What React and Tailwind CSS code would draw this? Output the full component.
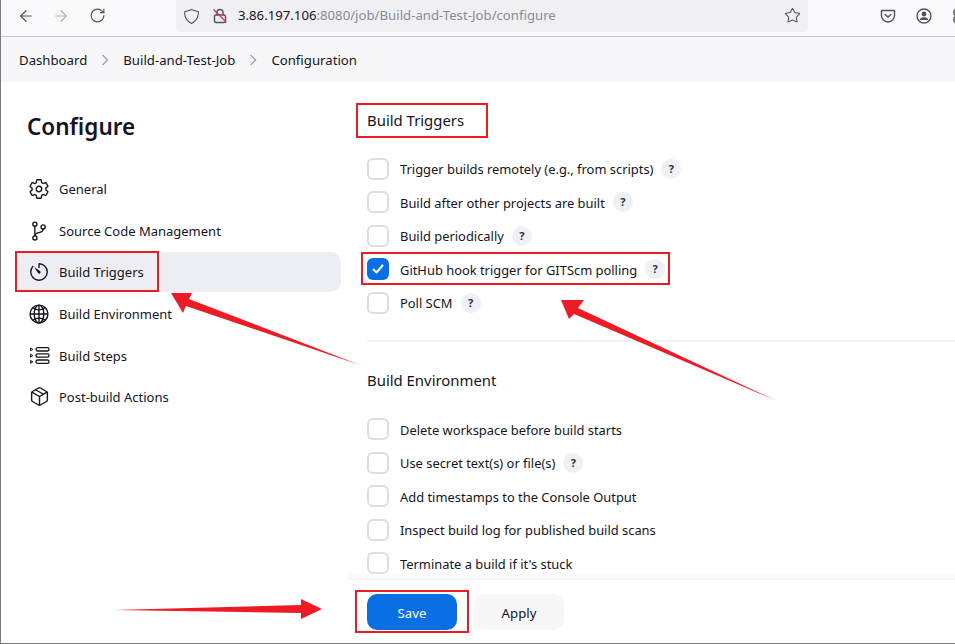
import { ArrowLeft, ArrowRight, RotateCw, Star, Package } from 'lucide-react';
import { IoSettingsOutline, IoGitBranchOutline, IoTimerOutline, IoGlobeOutline, IoShieldOutline } from 'react-icons/io5';

const sidebarItems = [
  { label: 'General', icon: <IoSettingsOutline size={22} /> },
  { label: 'Source Code Management', icon: <IoGitBranchOutline size={22} /> },
  { label: 'Build Triggers', icon: <IoTimerOutline size={22} />, active: true },
  { label: 'Build Environment', icon: <IoGlobeOutline size={22} /> },
  { label: 'Build Steps', icon: <StepsIcon /> },
  { label: 'Post-build Actions', icon: <Package size={21} strokeWidth={1.6} /> },
];

const triggers = [
  { label: 'Trigger builds remotely (e.g., from scripts)', help: true },
  { label: 'Build after other projects are built', help: true },
  { label: 'Build periodically', help: true },
  { label: 'GitHub hook trigger for GITScm polling', help: true, checked: true },
  { label: 'Poll SCM', help: true },
];

const environment = [
  { label: 'Delete workspace before build starts' },
  { label: 'Use secret text(s) or file(s)', help: true },
  { label: 'Add timestamps to the Console Output' },
  { label: 'Inspect build log for published build scans' },
  { label: "Terminate a build if it's stuck" },
];

function StepsIcon() {
  return (
    <svg width="21" height="21" viewBox="0 0 21 21" fill="none" stroke="currentColor" strokeWidth="1.3">
      <rect x="7" y="2.6" width="13" height="3.4" rx="1.7" />
      <rect x="7" y="8.8" width="13" height="3.4" rx="1.7" />
      <rect x="7" y="15" width="13" height="3.4" rx="1.7" />
      <path d="M1.5 3l2.4 1.4-2.4 1.4zM1.5 9.2l2.4 1.4-2.4 1.4zM1.5 15.4l2.4 1.4-2.4 1.4z" strokeWidth="1" />
    </svg>
  );
}

function Chevron() {
  return (
    <svg width="8" height="12" viewBox="0 0 8 12" fill="none" stroke="#9aa5b8" strokeWidth="1.4" className="mx-[14px]">
      <path d="M1.5 1l5 5-5 5" />
    </svg>
  );
}

function CheckRow({ label, help, checked }) {
  return (
    <div className="flex items-center h-[33.5px]">
      {checked ? (
        <span className="w-[22px] h-[22px] rounded-[6px] bg-[#0b6fe4] flex items-center justify-center">
          <svg width="14" height="14" viewBox="0 0 14 14" fill="none" stroke="white" strokeWidth="2" strokeLinecap="round" strokeLinejoin="round">
            <path d="M2.5 7.5l3 3 6-7" />
          </svg>
        </span>
      ) : (
        <span className="w-[22px] h-[22px] rounded-[6px] border-2 border-[#d9dde8] bg-white" />
      )}
      <span className="ml-[11px] pt-[2px] text-[12.9px] text-[#14141f]">{label}</span>
      {help && (
        <span className="ml-[8px] w-5 h-5 rounded-full bg-[#eef0f3] flex items-center justify-center text-[11px] font-bold text-[#2d3040]">?</span>
      )}
    </div>
  );
}

export default function App() {
  return (
    <div
      className="relative w-[955px] h-[644px] overflow-hidden bg-white border-l border-b border-[#7a7a7a] flex flex-col"
      style={{ fontFamily: '"Noto Sans", "Open Sans", sans-serif' }}
    >
      {/* Browser toolbar */}
      <div className="h-[37px] shrink-0 bg-[#f9f9fb] border-b border-[#c8c8cc] flex items-start pt-[7px] text-[#52525e]">
        <ArrowLeft size={18} strokeWidth={1.6} className="ml-[16px] shrink-0" />
        <ArrowRight size={18} strokeWidth={1.6} className="ml-[17px] shrink-0 text-[#b4b4bb]" />
        <RotateCw size={17} strokeWidth={1.6} className="ml-[19px] shrink-0" />
        <div className="ml-[70px] -mt-[7px] w-[632px] h-[32px] shrink-0 rounded-b-[4px] bg-[#f0f0f4] flex items-center relative">
          <IoShieldOutline size={17} className="ml-[7px]" />
          <svg width="16" height="16" viewBox="0 0 16 16" fill="none" className="ml-[12px]">
            <rect x="2.5" y="7" width="11" height="7.5" rx="1.5" stroke="#52525e" strokeWidth="1.4" />
            <path d="M5 7V4.5a3 3 0 0 1 6 0V7" stroke="#52525e" strokeWidth="1.4" />
            <path d="M1.5 1.5l13 13" stroke="#e22850" strokeWidth="1.3" />
          </svg>
          <span className="ml-[10px] text-[13.2px] text-[#8a8a92]">
            <span className="text-[#15141a]">3.86.197.106</span>:8080/job/Build-and-Test-Job/configure
          </span>
          <Star size={17} strokeWidth={1.5} className="absolute right-[7px] top-[7px]" />
        </div>
        <svg width="16" height="16" viewBox="0 0 16 16" fill="none" stroke="currentColor" strokeWidth="1.4" className="ml-[72px] mt-[1px] shrink-0">
          <path d="M2 2.5h12a.5.5 0 0 1 .5.5v4.5a6.5 6.5 0 0 1-13 0V3a.5.5 0 0 1 .5-.5z" />
          <path d="M5 6.5l3 2.5 3-2.5" strokeLinecap="round" />
        </svg>
        <svg width="16" height="16" viewBox="0 0 16 16" fill="none" className="ml-[20px] mt-[1px] shrink-0">
          <circle cx="8" cy="8" r="7" stroke="currentColor" strokeWidth="1.4" />
          <circle cx="8" cy="6" r="2.4" fill="currentColor" />
          <path d="M3.8 11.2c1-1.3 2.5-1.9 4.2-1.9s3.2.6 4.2 1.9v.8H3.8z" fill="currentColor" />
        </svg>
        <svg width="12" height="16" viewBox="0 0 12 16" fill="none" stroke="currentColor" strokeWidth="1.4" className="ml-[21px] mt-[1px] shrink-0">
          <rect x="1" y="2" width="5" height="5" rx="1" />
          <rect x="1" y="9" width="5" height="5" rx="1" />
        </svg>
      </div>

      {/* Breadcrumbs */}
      <div className="h-[45px] shrink-0 bg-[#f7f7f9] flex items-center pl-[18px] text-[13.2px] text-[#14141f]">
        <span className="pt-[2px]">Dashboard</span>
        <Chevron />
        <span className="pt-[2px]">Build-and-Test-Job</span>
        <Chevron />
        <span className="pt-[2px]">Configuration</span>
      </div>

      <div className="flex flex-1 min-h-0">
        {/* Sidebar */}
        <aside className="w-[340px] shrink-0 pl-[15px]">
          <h1 className="pl-[11px] mt-[27px] text-[22.5px] leading-[36px] font-semibold text-[#14141f]">Configure</h1>
          <nav className="mt-[24px] flex flex-col gap-[1.6px]">
            {sidebarItems.map((item) => (
              <div
                key={item.label}
                className={`h-[40px] rounded-[10px] flex items-center pl-[12px] text-[13px] text-[#14141f] ${item.active ? 'bg-[#edeef3]' : ''}`}
              >
                <span className="w-[22px] h-[22px] flex items-center justify-center">{item.icon}</span>
                <span className="ml-[9px] pt-[2px]">{item.label}</span>
              </div>
            ))}
          </nav>
        </aside>

        {/* Form */}
        <main className="flex-1 pl-[26px] min-w-0">
          <h2 className="mt-[26px] text-[14.9px] leading-[24px] font-normal text-[#14141f]">Build Triggers</h2>
          <div className="mt-[20px]">
            {triggers.map((row) => <CheckRow key={row.label} {...row} />)}
          </div>
          <div className="mt-[20px] h-[2px] bg-[#f3f3f7]" />
          <h2 className="mt-[26px] text-[14.9px] leading-[24px] font-normal text-[#14141f]">Build Environment</h2>
          <div className="mt-[21px]">
            {environment.map((row) => <CheckRow key={row.label} {...row} />)}
          </div>
        </main>
      </div>

      {/* Sticky save bar */}
      <div className="absolute left-[346px] right-0 bottom-0 h-[63px] pt-[1px] bg-white flex items-center pl-[20px] gap-[17px]">
        <div className="absolute left-0 right-0 -top-[8px] h-[8px] bg-gradient-to-b from-transparent to-[#f5f5f8]" />
        <button className="w-[90px] h-[36px] pt-[3px] rounded-[10px] bg-[#0b6fe4] text-white text-[13.2px]">Save</button>
        <button className="w-[90px] h-[36px] pt-[3px] rounded-[10px] bg-[#f7f7f9] text-[#14141f] text-[13.2px]">Apply</button>
      </div>

      {/* Screenshot annotations */}
      <div className="absolute left-[14px] top-[251px] w-[144px] h-[41px] border-2 border-[#ed1c24]" />
      <div className="absolute left-[355px] top-[103px] w-[132px] h-[35px] border-2 border-[#ed1c24]" />
      <div className="absolute left-[360px] top-[252px] w-[309px] h-[33px] border-2 border-[#ed1c24]" />
      <div className="absolute left-[354px] top-[590px] w-[114px] h-[43px] border-2 border-[#ed1c24]" />
      <svg className="absolute left-0 top-0 pointer-events-none" width="955" height="644" viewBox="0 0 955 644">
        <polygon fill="#ed1c24" points="170,293 191,293 188,299 359,365 185,306 182,313" />
        <polygon fill="#ed1c24" points="560,300 583,300 577,308 776,401 573,314 568,319" />
        <polygon fill="#ed1c24" points="113,610 300,605 300,599 321,609 300,619 300,613" />
      </svg>
    </div>
  );
}
